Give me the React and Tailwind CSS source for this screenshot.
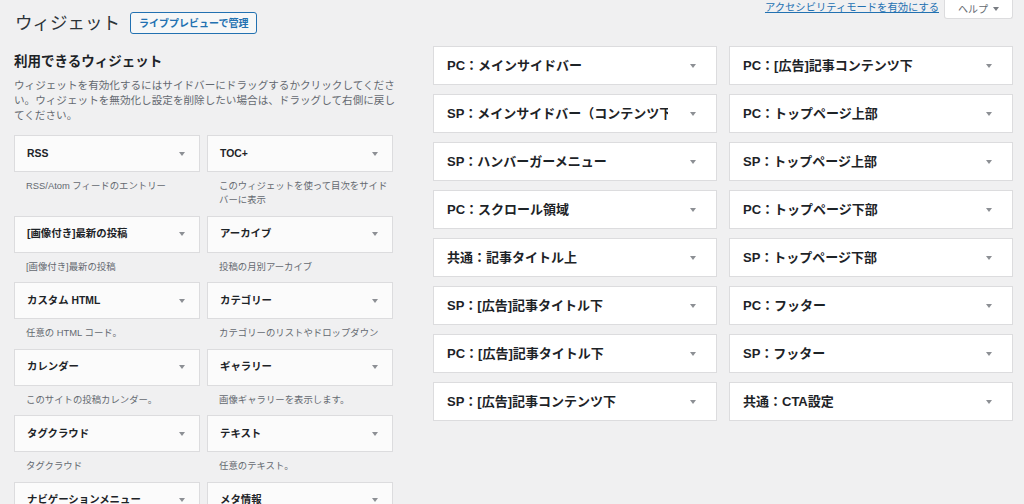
import React from 'react'

const available = [
  { name: "RSS", desc: "RSS/Atom フィードのエントリー" },
  { name: "TOC+", desc: "このウィジェットを使って目次をサイドバーに表示" },
  { name: "[画像付き]最新の投稿", desc: "[画像付き]最新の投稿" },
  { name: "アーカイブ", desc: "投稿の月別アーカイブ" },
  { name: "カスタム HTML", desc: "任意の HTML コード。" },
  { name: "カテゴリー", desc: "カテゴリーのリストやドロップダウン" },
  { name: "カレンダー", desc: "このサイトの投稿カレンダー。" },
  { name: "ギャラリー", desc: "画像ギャラリーを表示します。" },
  { name: "タグクラウド", desc: "タグクラウド" },
  { name: "テキスト", desc: "任意のテキスト。" },
  { name: "ナビゲーションメニュー", desc: "ナビゲーションメニューをサイドバーに追加します。" },
  { name: "メタ情報", desc: "ログイン、RSS、WordPress.org へのリンク。" },
];

const sidebarsLeft = [
  "PC：メインサイドバー",
  "SP：メインサイドバー（コンテンツ下）",
  "SP：ハンバーガーメニュー",
  "PC：スクロール領域",
  "共通：記事タイトル上",
  "SP：[広告]記事タイトル下",
  "PC：[広告]記事タイトル下",
  "SP：[広告]記事コンテンツ下",
];

const sidebarsRight = [
  "PC：[広告]記事コンテンツ下",
  "PC：トップページ上部",
  "SP：トップページ上部",
  "PC：トップページ下部",
  "SP：トップページ下部",
  "PC：フッター",
  "SP：フッター",
  "共通：CTA設定",
];

function Arrow() {
  return <span className="block w-0 h-0 border-x-[3px] border-x-transparent border-t-[4px] border-t-[#8c8f94]" />
}

function SidebarBox({ title }) {
  return (
    <div className="flex items-center h-[39px] bg-white border border-[#dcdcde]">
      <h3 className="flex-1 min-w-0 pl-[13px] overflow-hidden whitespace-nowrap text-[13px] font-bold leading-[18px]">{title}</h3>
      <div className="w-[48px] pl-[22px]">
        <Arrow />
      </div>
    </div>
  )
}

export default function App() {
  return (
    <div className="h-screen overflow-hidden bg-[#f0f0f1] text-[#1d2327] font-['Liberation_Sans','Noto_Sans_CJK_JP',sans-serif]">
      {/* header */}
      <div className="flex items-start justify-between h-[44px] pl-[15px] pr-[11px]">
        <div className="flex items-center gap-[10px] pt-[12px]">
          <h1 className="text-[17.5px] leading-[22px] font-normal text-[#2c3338]">ウィジェット</h1>
          <button className="h-[22px] px-[8px] border border-[#2271b1] rounded-[3px] bg-[#f6f7f7] text-[#2271b1] text-[10px] font-semibold">
            ライブプレビューで管理
          </button>
        </div>
        <div className="flex items-start gap-[5px]">
          <a href="#" className="mt-[1px] text-[10.3px] leading-[14px] text-[#2271b1] underline">アクセシビリティモードを有効にする</a>
          <div className="flex items-center justify-center gap-[5px] w-[69px] h-[19px] bg-white border border-t-0 border-[#dcdcde] rounded-b-[3px] text-[10px] text-[#646970]">
            ヘルプ
            <span className="block w-0 h-0 border-x-[3px] border-x-transparent border-t-[4px] border-t-[#787c82]" />
          </div>
        </div>
      </div>

      <div className="flex pl-[14px]">
        {/* available widgets */}
        <div className="w-[379px] shrink-0">
          <h2 className="mt-[9px] text-[13.5px] leading-[18px] font-bold">利用できるウィジェット</h2>
          <p className="mt-[7px] text-[10.6px] leading-[15px] text-[#646970] whitespace-nowrap">
            ウィジェットを有効化するにはサイドバーにドラッグするかクリックしてくださ<br />
            い。ウィジェットを無効化し設定を削除したい場合は、ドラッグして右側に戻し<br />
            てください。
          </p>
          <div className="grid grid-cols-2 gap-x-[7px] mt-[12px]">
            {available.map((w) => (
              <div key={w.name}>
                <div className="flex items-center h-[37px] bg-[#fbfbfb] border border-[#dcdcde]">
                  <h3 className="flex-1 min-w-0 pl-[12px] overflow-hidden whitespace-nowrap text-[10.4px] font-bold leading-[14px]">{w.name}</h3>
                  <div className="w-[30px] pl-[10px]">
                    <Arrow />
                  </div>
                </div>
                <p className="pt-[7px] pb-[8.5px] pl-[12px] pr-[4px] text-[9.4px] leading-[14px] text-[#646970]">{w.desc}</p>
              </div>
            ))}
          </div>
        </div>

        {/* sidebars */}
        <div className="ml-[40px] mt-[2px] w-[580px] flex gap-[12px] self-start">
          <div className="flex-1 min-w-0 flex flex-col gap-[9px]">
            {sidebarsLeft.map((t) => <SidebarBox key={t} title={t} />)}
          </div>
          <div className="flex-1 min-w-0 flex flex-col gap-[9px]">
            {sidebarsRight.map((t) => <SidebarBox key={t} title={t} />)}
          </div>
        </div>
      </div>
    </div>
  )
}
